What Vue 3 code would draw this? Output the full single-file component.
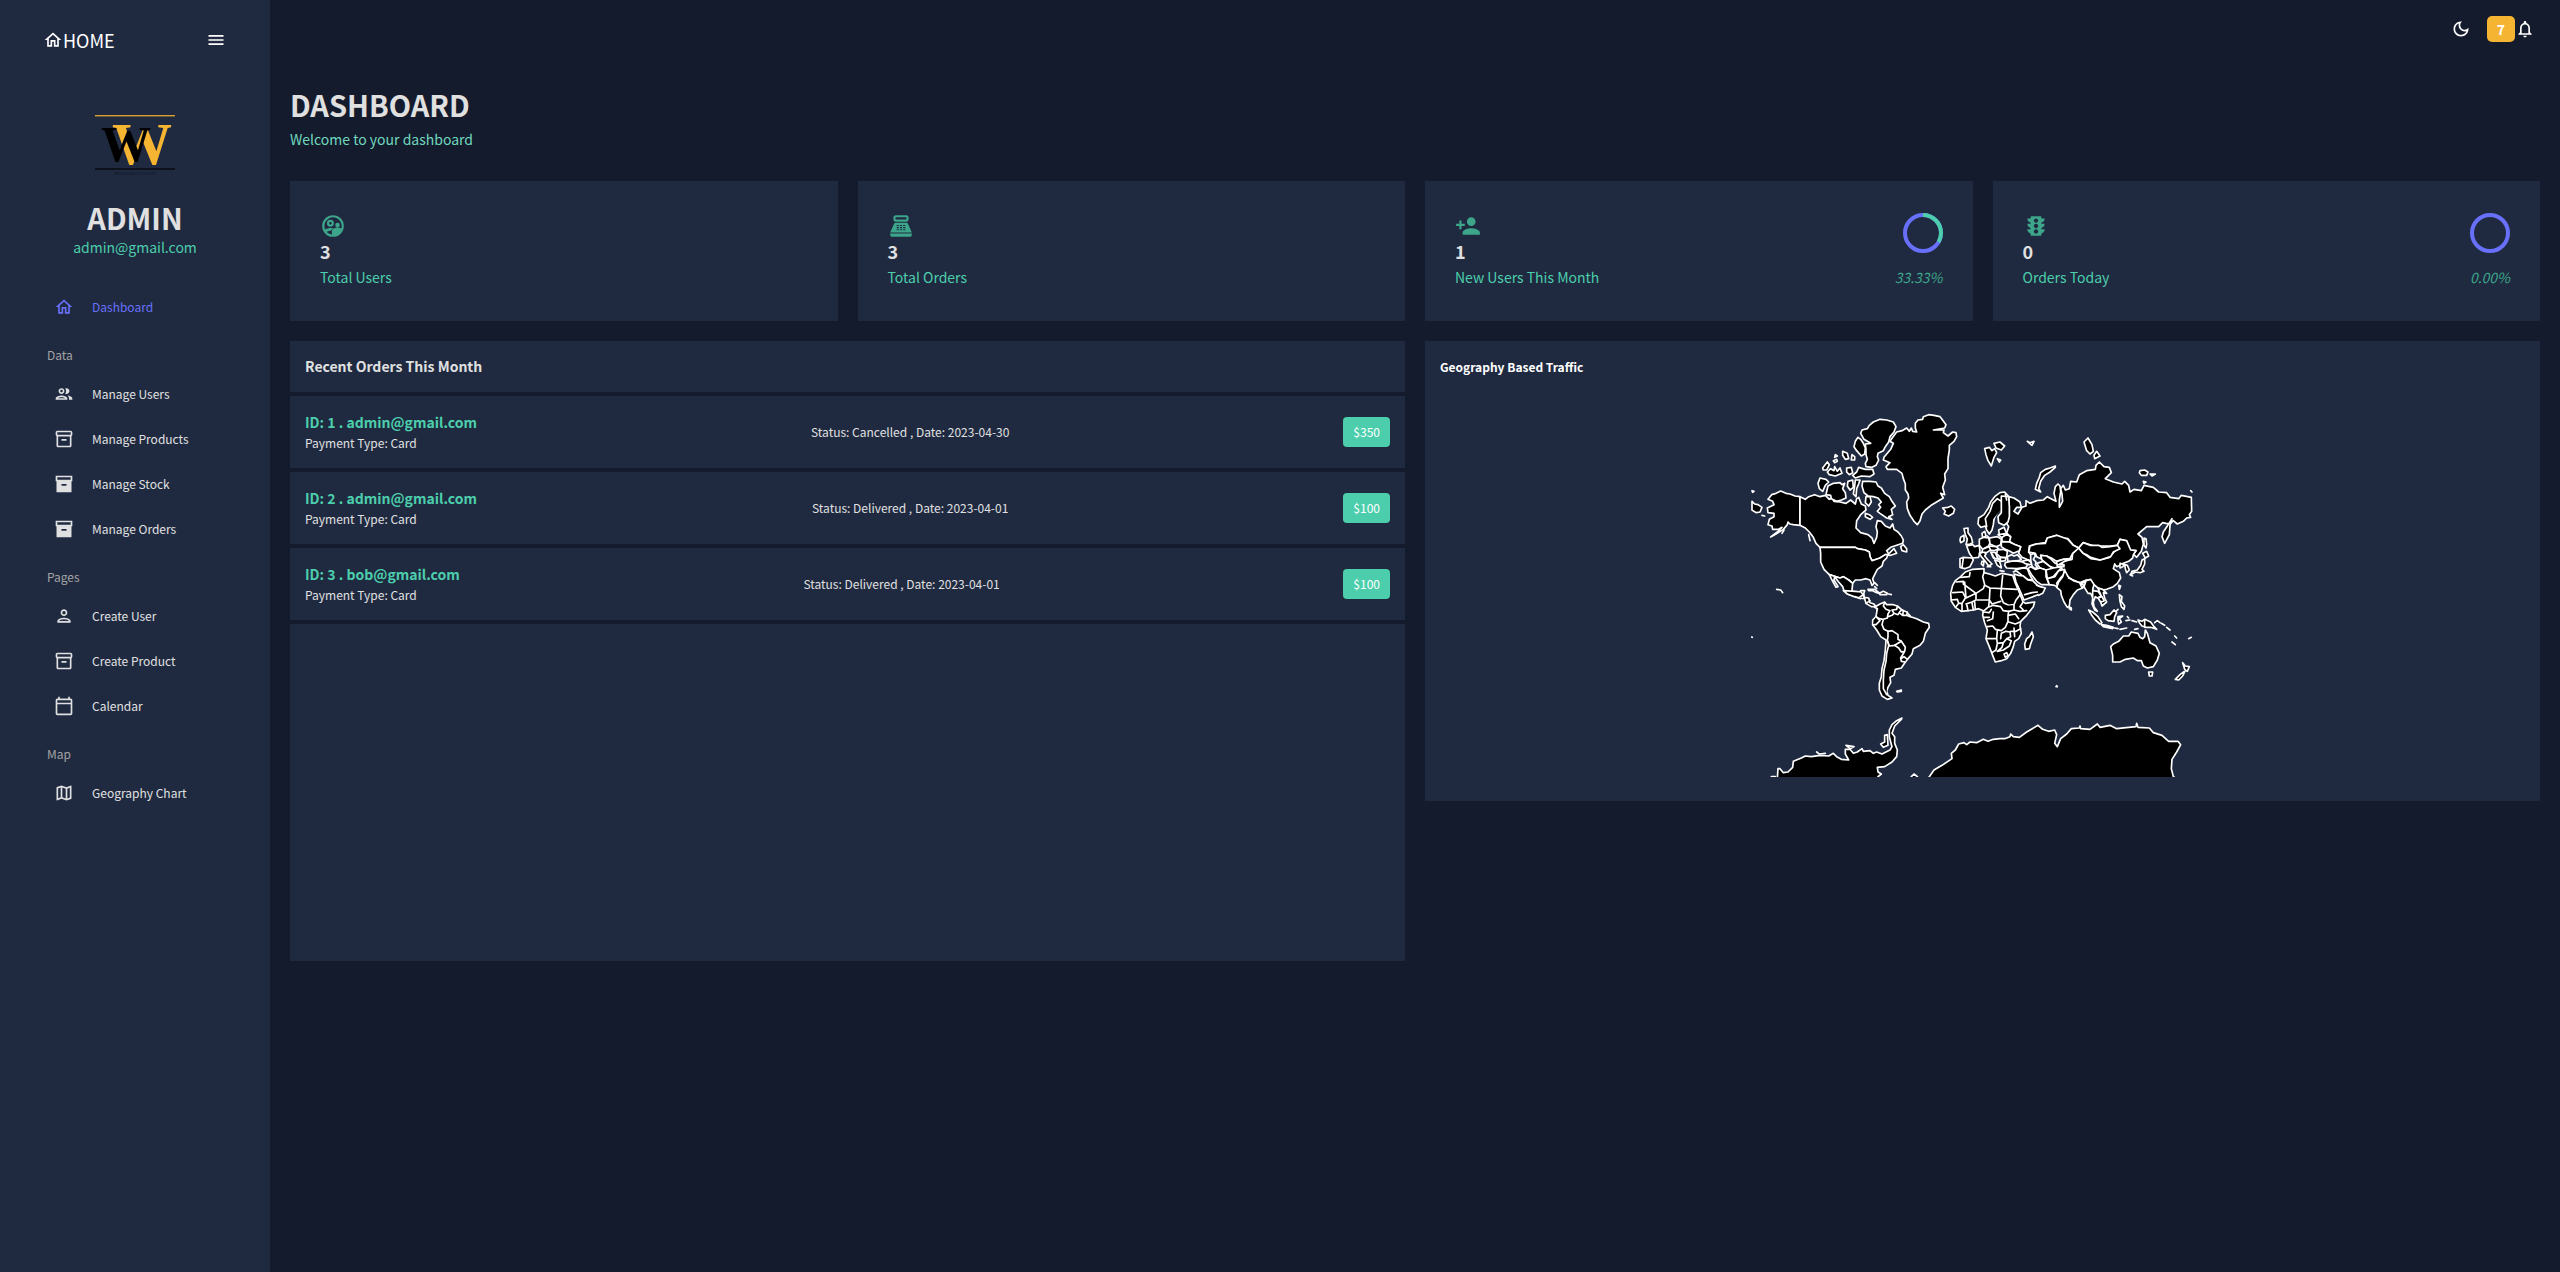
<script setup>
const icons = {
  home: 'm12 5.69 5 4.5V18h-2v-6H9v6H7v-7.81l5-4.5M12 3 2 12h3v8h6v-6h2v6h6v-8h3L12 3z',
  menu: 'M3 18h18v-2H3v2zm0-5h18v-2H3v2zm0-7v2h18V6H3z',
  people:
    'M9 13.75c-2.34 0-7 1.17-7 3.5V19h14v-1.75c0-2.33-4.66-3.5-7-3.5zM4.34 17c.84-.58 2.87-1.25 4.66-1.25s3.82.67 4.66 1.25H4.34zM9 12c1.93 0 3.5-1.57 3.5-3.5S10.93 5 9 5 5.5 6.57 5.5 8.5 7.07 12 9 12zm0-5c.83 0 1.5.67 1.5 1.5S9.83 10 9 10s-1.5-.67-1.5-1.5S8.17 7 9 7zm7.04 6.81c1.16.84 1.96 1.96 1.96 3.44V19h4v-1.75c0-2.02-3.5-3.17-5.96-3.44zM15 12c1.93 0 3.5-1.57 3.5-3.5S16.93 5 15 5c-.54 0-1.04.13-1.5.35.63.89 1 1.98 1 3.15s-.37 2.26-1 3.15c.46.22.96.35 1.5.35z',
  box: 'M20 2H4c-1 0-2 .9-2 2v3.01c0 .72.43 1.34 1 1.69V20c0 1.1 1.1 2 2 2h14c.9 0 2-.9 2-2V8.7c.57-.35 1-.97 1-1.69V4c0-1.1-1-2-2-2zm-1 18H5V9h14v11zm1-13H4V4h16v3zM9 12h6v2H9z',
  boxSolid: 'M2 2v6.7h1V22h18V8.7h1V2H2zm13 12H9v-2h6v2zm5-7H4V4h16v3z',
  person:
    'M12 6c1.1 0 2 .9 2 2s-.9 2-2 2-2-.9-2-2 .9-2 2-2m0 10c2.7 0 5.8 1.29 6 2H6c.23-.72 3.31-2 6-2m0-12C9.79 4 8 5.79 8 8s1.79 4 4 4 4-1.79 4-4-1.79-4-4-4zm0 10c-2.67 0-8 1.34-8 4v2h16v-2c0-2.66-5.33-4-8-4z',
  calendar:
    'M20 3h-1V1h-2v2H7V1H5v2H4c-1.1 0-2 .9-2 2v16c0 1.1.9 2 2 2h16c1.1 0 2-.9 2-2V5c0-1.1-.9-2-2-2zm0 18H4V10h16v11zm0-13H4V5h16v3z',
  map: 'M20.5 3l-.16.03L15 5.1 9 3 3.36 4.9c-.21.07-.36.25-.36.48V20.5c0 .28.22.5.5.5l.16-.03L9 18.9l6 2.1 5.64-1.9c.21-.07.36-.25.36-.48V3.5c0-.28-.22-.5-.5-.5zM10 5.47l4 1.4v11.66l-4-1.4V5.47zm-5 .99l3-1.01v11.7l-3 1.16V6.46zm14 11.08l-3 1.01V6.86l3-1.16v11.84z',
  moon: 'M9.37 5.51c-.18.64-.27 1.31-.27 1.99 0 4.08 3.32 7.4 7.4 7.4.68 0 1.35-.09 1.99-.27C17.45 17.19 14.93 19 12 19c-3.86 0-7-3.14-7-7 0-2.93 1.81-5.45 4.37-6.49zM12 3c-4.97 0-9 4.03-9 9s4.03 9 9 9 9-4.03 9-9c0-.46-.04-.92-.1-1.36-.98 1.37-2.58 2.26-4.4 2.26-2.98 0-5.4-2.42-5.4-5.4 0-1.81.89-3.42 2.26-4.4-.44-.06-.9-.1-1.36-.1z',
  bell: 'M12 22c1.1 0 2-.9 2-2h-4c0 1.1.89 2 2 2zm6-6v-5c0-3.07-1.64-5.64-4.5-6.32V4c0-.83-.67-1.5-1.5-1.5s-1.5.67-1.5 1.5v.68C7.63 5.36 6 7.92 6 11v5l-2 2v1h16v-1l-2-2zm-2 1H8v-6c0-2.48 1.51-4.5 4-4.5s4 2.02 4 4.5v6z',
  users:
    'M12 2a10 10 0 1 0 0 20 10 10 0 0 0 0-20zm0 2a8 8 0 0 1 7.7 10.2c-1-.6-2.3-.9-3.5-.9-2.5 0-5.2 1.3-5.2 3.5v3.1a8 8 0 0 1-4.7-2.3c.9-.8 2.6-1.4 4-1.5.4-.8 1.1-1.4 1.9-1.9-.9-.2-1.8-.3-2.6-.3-1.6 0-3.5.5-4.8 1.4A8 8 0 0 1 12 4zM9.6 6.2a3.2 3.2 0 1 0 0 6.4 3.2 3.2 0 0 0 0-6.4zm0 2a1.2 1.2 0 1 1 0 2.4 1.2 1.2 0 0 1 0-2.4zM16.2 8.9a2.1 2.1 0 1 0 0 4.2 2.1 2.1 0 0 0 0-4.2z',
  register:
    'M17 2H7c-1.1 0-2 .9-2 2v2c0 1.1.9 2 2 2h10c1.1 0 2-.9 2-2V4c0-1.1-.9-2-2-2zm0 4H7V4h10v2zM20 22H4c-1.1 0-2-.9-2-2v-1h20v1c0 1.1-.9 2-2 2zM18.53 10.19C18.21 9.47 17.49 9 16.7 9H7.3c-.79 0-1.51.47-1.83 1.19L2 18h20l-3.47-7.81zM8 15h2v1H8zM8 13h2v1H8zM8 11h2v1H8zM11 15h2v1h-2zM11 13h2v1h-2zM11 11h2v1h-2zM14 15h2v1h-2zM14 13h2v1h-2zM14 11h2v1h-2z',
  personAdd:
    'M15 12c2.21 0 4-1.79 4-4s-1.79-4-4-4-4 1.79-4 4 1.79 4 4 4zm-9-2V7H4v3H1v2h3v3h2v-3h3v-2H6zm9 4c-2.67 0-8 1.34-8 4v2h16v-2c0-2.66-5.33-4-8-4z',
  traffic:
    'M20 10h-3V8.86c1.72-.45 3-2 3-3.86h-3V4c0-.55-.45-1-1-1H8c-.55 0-1 .45-1 1v1H4c0 1.86 1.28 3.41 3 3.86V10H4c0 1.86 1.28 3.41 3 3.86V15H4c0 1.86 1.28 3.41 3 3.86V20c0 .55.45 1 1 1h8c.55 0 1-.45 1-1v-1.14c1.72-.45 3-2 3-3.86h-3v-1.14c1.72-.45 3-2 3-3.86zm-8 9c-1.11 0-2-.9-2-2s.89-2 2-2c1.1 0 2 .9 2 2s-.89 2-2 2zm0-5c-1.11 0-2-.9-2-2s.89-2 2-2c1.1 0 2 .9 2 2s-.89 2-2 2zm0-5c-1.11 0-2-.9-2-2 0-1.11.89-2 2-2 1.1 0 2 .89 2 2 0 1.1-.89 2-2 2z',
}

const sections = [
  { title: '', items: [{ label: 'Dashboard', icon: 'home', active: true }] },
  {
    title: 'Data',
    items: [
      { label: 'Manage Users', icon: 'people' },
      { label: 'Manage Products', icon: 'box' },
      { label: 'Manage Stock', icon: 'boxSolid' },
      { label: 'Manage Orders', icon: 'boxSolid' },
    ],
  },
  {
    title: 'Pages',
    items: [
      { label: 'Create User', icon: 'person' },
      { label: 'Create Product', icon: 'box' },
      { label: 'Calendar', icon: 'calendar' },
    ],
  },
  { title: 'Map', items: [{ label: 'Geography Chart', icon: 'map' }] },
]

const stats = [
  { icon: 'users', value: '3', label: 'Total Users' },
  { icon: 'register', value: '3', label: 'Total Orders' },
  { icon: 'personAdd', value: '1', label: 'New Users This Month', share: 33.33 },
  { icon: 'traffic', value: '0', label: 'Orders Today', share: 0 },
]

const orders = [
  { id: 1, email: 'admin@gmail.com', payment: 'Card', status: 'Cancelled', date: '2023-04-30', total: 350 },
  { id: 2, email: 'admin@gmail.com', payment: 'Card', status: 'Delivered', date: '2023-04-01', total: 100 },
  { id: 3, email: 'bob@gmail.com', payment: 'Card', status: 'Delivered', date: '2023-04-01', total: 100 },
]

// Land masses, grouped by continent; each group has its own origin on the map.
const land = [
  {
    name: 'north-america',
    x: 0,
    y: 0,
    shapes: [
      'M180 290L165 288 150 282 138 280 122 273 108 280 95 284 84 298 98 304 102 314 82 324 84 338 102 340 102 350 88 358 84 374 96 378 98 388 116 388 126 382 112 396 92 411 108 402 130 388 142 374 144 366 150 372 160 374 180 376Z',
      'M180 290L196 298 206 290 224 284 240 290 256 286 268 298 276 294 282 304 300 306 318 310 332 300 346 312 350 296 356 292 364 312 376 318 378 330 362 344 350 362 348 384 362 398 384 404 396 414 402 430 410 412 412 396 408 380 412 362 424 364 436 378 450 384 458 372 462 388 474 396 484 408 490 420 488 430 470 436 452 442 440 452 446 462 462 446 470 460 452 466 436 464 420 474 396 482 390 470 388 456 376 450 352 446 346 442 240 442 228 430 220 412 208 396 196 384 180 376Z',
      'M240 442L346 442 352 446 376 450 388 456 390 470 396 482 420 474 436 464 444 464 440 474 430 484 426 498 412 508 404 524 398 536 402 550 396 556 390 540 378 536 362 540 346 540 338 550 326 540 310 530 300 534 268 524 252 508 242 486 242 460Z',
      'M268 524L300 534 310 530 326 540 338 550 336 570 344 582 356 584 362 572 374 572 370 584 362 596 344 590 322 582 312 572 308 560 296 546 284 530 282 540 294 560 288 562 276 540Z',
      'M500 84L486 92 470 96 458 112 450 124 460 130 452 148 432 172 430 180 450 188 438 200 442 208 470 208 486 220 490 236 496 252 496 270 504 282 506 294 500 306 502 326 510 346 522 364 532 374 540 362 546 342 556 330 576 314 596 302 610 294 602 280 614 284 608 262 616 240 614 222 624 206 624 176 628 150 628 136 642 124 650 110 648 98 638 96 624 108 610 98 612 90 580 90 614 84 618 74 606 58 600 50 582 46 566 44 550 50 548 58 534 60 526 70 526 84 530 96 518 94 514 84 508 94Z',
      'M400 66L420 58 440 60 460 66 468 80 462 96 450 110 446 126 436 140 430 152 414 160 412 170 416 180 408 196 396 202 378 200 376 190 382 178 378 164 378 150 376 132 392 130 372 118 362 100 366 90 382 86 388 76Z',
      'M354 112L346 124 342 140 350 152 364 168 374 162 376 144 370 130 362 118Z',
      'M366 258L368 244 390 244 408 246 414 258 424 264 434 280 448 290 456 304 466 318 454 328 458 344 446 350 456 358 440 354 420 340 412 334 422 322 416 314 424 306 414 294 400 290 384 288 372 278Z',
      'M356 202L376 208 398 208 402 222 390 230 364 228 346 234 338 226 350 216Z',
      'M240 234L258 238 266 246 256 256 248 274 238 266 234 250Z',
      'M264 258L280 250 300 248 306 254 314 250 308 266 316 278 318 294 304 300 290 304 274 296 272 286 258 284Z',
      'M324 244L338 240 340 262 330 270 322 258Z',
      'M346 240L360 240 356 252 350 266 348 290 340 282 344 258Z',
      'M248 204L262 186 268 194 260 210 250 210Z',
      'M262 216L272 206 282 212 284 200 292 214 300 204 306 220 286 228 268 224Z',
      'M308 154L322 160 326 176 316 178 308 166Z',
      'M320 204L334 202 338 218 328 224 320 216Z',
      'M336 164L344 170 344 180 334 180Z',
      'M286 164L292 168 284 172ZM280 182L290 178 292 184 284 188Z',
      'M378 290L390 290 394 306 386 318 376 308Z',
      'M376 340L388 344 398 352 390 358 376 350Z',
      'M608 324L624 322 634 318 644 328 640 340 626 348 612 342 616 334Z',
      'M36 304L44 312 54 314 66 322 60 336 48 338 36 330Z',
      'M36 272L42 274 38 277ZM66 346L74 348',
      'M482 440L490 434 500 446 500 456 486 452Z',
      'M384 568L404 568 420 580 410 578 398 572 386 572Z',
      'M418 580L430 574 442 580 440 584 420 584ZM446 582L454 584',
      'M404 548L412 556M404 560L410 566',
      'M110 568L122 570 128 578M132 390L126 400M206 404L210 422',
    ],
  },
  {
    name: 'south-america',
    x: 0,
    y: 570,
    shapes: [
      'M310 2L322 12 344 20 360 24 374 26 378 40 394 50 408 50 402 42 390 38 386 24 372 22 364 6 346 4Z',
      'M360 20L372 14 372 24M378 40L390 32',
      'M412 56L404 52 410 48 420 42 434 36 440 44 460 44 472 48 486 60 500 66 512 80 530 86 550 96 566 100 568 112 556 130 550 154 540 166 520 176 516 192 504 206 496 216 484 234 466 238 462 256 450 262 452 278 444 292 440 304 444 316 456 324 442 328 426 318 418 300 418 280 424 260 426 236 432 212 436 180 438 150 422 140 410 120 398 104 398 90 410 78Z',
      'M412 56L408 80 418 86 430 88 426 104 432 118 444 124 M434 38L430 48 438 58 450 62 444 72 442 84 430 88 M444 80L456 76 462 70 456 60 470 58 472 48 M462 70L474 74 480 64 486 60M480 70L488 76 490 62M490 76L500 76 502 66M500 76L510 80',
      'M444 124L456 122 474 134 474 148 484 154 480 162 464 166 448 168 442 152 444 140Z',
      'M442 152L446 166 440 190 438 214 432 240 430 270 430 296 440 314',
      'M464 166L484 154 496 172 494 184 484 186 476 174Z M494 184L482 204 484 214 496 216 M482 206L492 200 502 208',
      'M398 104L408 104 420 92 408 80',
      'M470 304L484 300 484 304 472 306Z',
      'M34 141L37 142',
    ],
  },
  {
    name: 'antarctica',
    x: 0,
    y: 570,
    shapes: [
      'M112 566L114 536 120 536 130 548 144 546 158 532 160 514 184 504 196 498 214 500 240 496 266 498 280 490 290 500 304 508 326 510 316 492 316 478 330 478 340 490 352 486 366 476 370 484 390 482 400 490 410 486 426 492 450 480 456 470 448 440 448 420 456 404 470 392 486 384 484 388 464 408 456 430 464 440 464 460 472 480 470 500 456 516 434 530 412 532 414 546 424 552 414 560 416 566Z',
      'M422 462L434 456 434 436 442 434 444 466 430 472Z',
      'M230 486L238 492 256 490M318 466L342 470 330 476ZM94 560L106 560M514 560L522 552 532 560',
      'M564 566L582 540 606 526 636 506 634 490 646 480 656 462 672 458 680 464 690 456 710 458 730 448 744 454 760 448 780 446 794 446 810 440 812 432 820 440 838 442 860 426 894 406 908 418 926 424 944 420 950 434 944 460 952 470 962 446 980 432 994 416 1018 414 1020 408 1022 416 1050 418 1072 402 1080 412 1110 406 1130 416 1188 410 1190 400 1194 412 1228 414 1240 428 1266 436 1286 454 1314 454 1322 464 1310 486 1296 508 1294 536 1300 560 1310 566Z',
      'M948 290L952 290 950 287Z',
    ],
  },
  {
    name: 'europe-and-asia',
    x: 600,
    y: 60,
    shapes: [
      'M206 230L222 234 240 246 244 262 230 262 222 274 234 282 246 262 258 258 258 242 270 250 290 242 310 240 322 230 336 238 348 244 342 220 346 200 354 192 360 198 362 214 358 240 358 262 368 244 366 222 362 206 370 196 376 210 388 206 392 184 410 186 418 164 440 152 466 148 468 136 478 126 492 140 508 142 514 158 496 176 520 186 546 192 554 184 566 196 570 216 582 208 604 212 612 196 640 202 656 216 680 218 690 232 716 236 724 226 754 232 755 274 748 284 752 292 740 294 730 304 712 312 700 302 690 312 678 310 668 308 656 320 620 320 594 342 606 352 610 372 604 394 590 412 580 402 588 392 570 390 560 364 540 358 532 376 510 378 484 378 462 378 430 368 416 384 400 376 384 356 370 354 350 346 322 354 316 368 288 372 268 378 266 396 272 404 276 424 260 418 246 412 236 400 242 380 220 372 206 362 212 350 200 340 206 320 200 310 208 290 208 260Z',
      'M696 296L690 316 688 344 674 370 666 350 670 336 682 318Z',
      'M352 430L370 424 396 418 398 400 416 384 430 400 452 416 480 420 508 412 522 396 534 384 532 376 540 358 560 362 572 390 588 392 580 404 578 414 566 424 550 430 540 436 530 440 524 432 520 446 538 458 542 474 532 490 520 500 500 508 488 510 474 504 462 494 452 480 436 482 420 488 400 482 388 476 374 456Z',
      'M416 384L430 368 450 376 476 376 486 382 510 380 532 376 540 386 520 396 512 410 480 420 452 412 440 404 430 400Z',
      'M266 396L270 378 290 372 316 370 322 354 350 346 384 358 400 376 416 384 398 400 390 416 370 418 350 424 334 414 320 408 302 406 306 418 290 410 286 400Z',
      'M302 406L320 408 334 418 346 430 366 430 366 438 350 446 330 440 306 420Z',
      'M290 430L310 424 330 440 342 448 324 452 300 444Z',
      'M350 424L370 418 390 416 370 426 356 434 372 434 372 440 352 440Z',
      'M272 440L286 448 300 444 318 450 318 470 328 494 304 494 290 484 276 466 264 446Z',
      'M318 450L340 444 366 440 356 452 340 470 322 476Z',
      'M322 476L345 470 356 452 374 448 372 462 360 476 350 490 356 504 344 496 328 494Z',
      'M374 450L384 470 400 482 424 490 450 482 438 492 428 504 412 510 400 524 390 540 388 558 382 562 372 546 364 526 362 512 350 502 356 486 368 470Z',
      'M386 474L408 484M424 486L440 480M420 490L426 504 432 496Z',
      'M387 560L394 564 394 570 388 566Z',
      'M438 482L452 478 462 494 458 508 466 518 458 532 452 520 444 520 432 500Z',
      'M458 512L474 514 484 528 472 534 466 530 460 546 462 560 472 574 464 570 456 552 458 536Z',
      'M474 504L488 508 500 520 490 518 494 534 500 546 486 558 482 546 492 542 484 528 478 514Z',
      'M474 534L486 530 492 542 482 546Z',
      'M446 570L458 576 474 590 486 608 480 612 466 600 454 584Z',
      'M484 614L500 616 520 622 518 626 490 620ZM524 624L534 626M540 628L560 624',
      'M496 586L510 584 522 570 530 578 524 590 522 604 504 602 496 596Z',
      'M534 590L548 588 538 596 544 606 536 612 534 600ZM534 568L528 574',
      'M538 524L546 530 544 544 554 558 552 568 544 560 540 544Z',
      'M536 496L542 498 538 508Z',
      'M558 602L570 600M562 590L566 594M576 602L590 606M584 628L594 626',
      'M594 600L606 604 614 598 632 606 642 620 650 628 632 622 618 622 606 618 598 608Z',
      'M614 600L614 622M644 608L652 602 660 608M664 610L674 616M680 622L690 630',
      'M554 434L562 436 568 450 560 458 556 446Z',
      'M540 430L554 434 548 440 540 444Z',
      'M612 354L618 356 620 372 618 384 612 376Z',
      'M608 400L620 394 626 408 616 414Z M614 416L614 432 606 448 612 454 600 458 586 456 572 464 576 454 592 450 602 436 606 420Z M570 464L578 468',
      'M432 66L444 54 456 74 460 94 450 102 440 92Z',
      'M470 94L480 108 464 116 462 106Z',
      'M346 138L330 144 316 148 302 158 298 172 290 190 286 208 302 216 296 206 302 184 314 166 330 156 346 142Z',
      'M600 152L614 150 624 156 620 166 604 166 598 158Z M630 162L646 162 636 168Z M610 184L618 186 612 190Z M752 212L756 216',
      'M134 86L148 82 156 92 164 86 170 98 162 112 154 138 144 122 138 104Z',
      'M162 70L180 66 194 78 184 90 168 84Z M172 116L182 120 178 126Z M262 64L270 68 282 64 276 76Z',
      'M206 230L194 216 180 218 164 230 152 246 146 262 132 284 116 294 114 312 122 322 136 318 140 330 148 342 156 330 160 314 162 298 166 288 176 272 184 268 184 278 174 290 176 308 192 316 204 306 208 290 208 260Z',
      'M140 320L136 296 150 274 158 250 172 236 184 244 184 268M184 244L184 228 206 230M196 222L200 240',
      'M126 340L134 334 138 348 128 354Z M142 348L146 352',
      'M72 326L84 324 84 338 94 352 98 368 90 372 78 374 82 358 76 344Z',
      'M62 352L72 346 72 362 62 368 60 360Z',
      'M118 358L132 352 146 354 150 368 146 378 128 388 118 376Z',
      'M148 354L172 350 184 358 182 374 168 380 150 372Z',
      'M176 330L192 322 200 340 186 342 178 344Z M174 344L190 342 196 350 184 352Z',
      'M186 352L202 342 212 352 208 366 186 364Z',
      'M184 366L208 366 226 374 242 380 238 392 220 400 210 394 196 388 184 380Z',
      'M80 378L98 374 104 380 118 376 120 396 116 412 98 414 88 400Z',
      'M60 416L70 412 96 414 100 420 90 440 74 446 60 442Z M70 414L66 442',
      'M118 400L132 396 138 402 134 408 144 420 156 432 146 438 136 424 124 410Z M126 424L132 424 130 438 124 432Z M142 440L152 440',
      'M128 388L146 380 154 388 140 398 126 396Z',
      'M146 378L168 380 176 386 162 392 152 390Z',
      'M172 390L190 388 202 394 200 412 182 412 170 402Z',
      'M152 396L166 398 172 412 178 418 160 414Z',
      'M180 412L198 414 196 422 182 424Z M164 420L178 424 182 434 184 444 172 436Z M156 402L164 416',
      'M180 452L192 454M220 456L228 452',
      'M196 428L220 422 250 426 266 430 258 442 230 446 200 444 194 436Z',
      'M244 424L264 420 278 430 268 434 254 430Z',
      'M226 450L250 444 262 446 268 462 278 480 262 478 246 466Z',
      'M222 462L236 466 250 468 264 480 278 482 290 494 310 506 306 518 290 526 262 536 252 540 246 526 238 508 228 486Z',
      'M290 496L300 500 316 504 308 520 296 526M254 524L276 518 292 516',
      'M512 680L520 672 536 664 550 648 566 648 574 636 594 640 600 652 608 656 614 650 616 630 622 640 630 668 648 678 658 700 652 720 640 740 622 744 610 738 604 722 592 722 580 714 556 718 540 726 518 726 518 706Z',
      'M626 756L638 756 636 768 628 768Z',
      'M728 728L736 738 748 740 742 754 734 748Z M736 752L728 768 716 780 706 778 720 764Z',
      'M704 648L710 654M696 666L706 674M746 656L754 652',
    ],
  },
  {
    name: 'africa',
    x: 600,
    y: 60,
    shapes: [
      'M62 470L76 456 98 448 132 446 132 458 148 462 166 468 186 460 218 466 224 484 232 504 240 522 248 544 256 550 284 546 280 560 260 586 242 604 240 618 244 640 236 656 224 664 220 680 212 700 200 716 184 722 166 726 158 706 148 680 138 656 142 630 134 608 128 586 130 572 116 566 100 570 84 572 64 574 46 562 34 544 32 520 38 496 46 482Z',
      'M62 472L88 470 90 458 M48 486L70 484 70 492 108 520 130 506 134 494 128 470 132 458 M108 520L78 534 74 486 M38 518L68 516 76 532 M34 540L52 538 56 550 66 550 76 534 M66 550L66 572M56 550L48 560M80 552L84 572M96 548L100 570M78 552L96 546 108 540 108 520M104 546L106 568',
      'M134 496L150 504 184 506 188 466M188 506L230 508M184 506L182 528 190 548 206 556 222 554 228 540 240 524M150 504L148 540 112 540M148 540L146 560 130 574M148 540L156 552 182 544',
      'M148 560L160 556 182 560 190 572 206 574 222 570 222 556M130 576L148 578 154 568M142 602L158 596 160 576 M132 592L148 592',
      'M142 620L158 618 166 628 184 632 196 622 204 604 204 586 206 574M140 656L170 656 172 632M170 656L172 670 168 690 156 698M172 670L190 668 200 656 212 650 210 636 198 634 184 640 182 656M206 606L226 612 240 606M204 586L226 582 236 596M222 570L240 574 260 572M212 634L228 634 242 626M222 624L224 650M190 668L186 682 172 694 190 690 208 678 214 662 200 656M248 548L240 560 250 570',
      'M192 702L200 698 204 706 196 712Z',
      'M276 636L280 650 272 672 268 686 256 688 254 672 260 656 268 650Z',
    ],
  },
]
</script>

<template>
  <div class="app">
    <aside class="sidebar">
      <div class="brand-row">
        <a class="home-link" href="#">
          <svg class="icon" viewBox="0 0 24 24" aria-hidden="true"><path :d="icons.home" /></svg>
          <span>HOME</span>
        </a>
        <button class="icon-button" type="button" aria-label="Collapse menu">
          <svg class="icon" viewBox="0 0 24 24" aria-hidden="true"><path :d="icons.menu" /></svg>
        </button>
      </div>

      <div class="profile">
        <svg class="logo" viewBox="0 0 80 64" role="img" aria-label="Logo">
          <rect x="0" y="0" width="80" height="1" fill="#d9a032" />
          <rect x="0" y="1" width="80" height="1" fill="#6b5a38" />
          <text class="logo-letter gold" x="17" y="49">W</text>
          <text class="logo-letter dark" x="6" y="46">W</text>
          <rect x="0" y="53" width="80" height="2" fill="#0d121c" />
          <text class="logo-tagline" x="40" y="60">PREMIUM QUALITY CLOTHING</text>
        </svg>
        <h2 class="profile-name">ADMIN</h2>
        <p class="profile-mail">admin@gmail.com</p>
      </div>

      <nav class="nav">
        <section v-for="section in sections" :key="section.title">
          <h3 v-if="section.title" class="nav-title">{{ section.title }}</h3>
          <a
            v-for="item in section.items"
            :key="item.label"
            class="nav-item"
            :class="{ active: item.active }"
            href="#"
          >
            <svg class="icon" viewBox="0 0 24 24" aria-hidden="true"><path :d="icons[item.icon]" /></svg>
            <span>{{ item.label }}</span>
          </a>
        </section>
      </nav>
    </aside>

    <main class="content">
      <header class="topbar">
        <button class="icon-button" type="button" aria-label="Toggle dark mode">
          <svg class="icon" viewBox="0 0 24 24" aria-hidden="true"><path :d="icons.moon" /></svg>
        </button>
        <button class="icon-button alerts" type="button" aria-label="Notifications">
          <span class="count">7</span>
          <svg class="icon" viewBox="0 0 24 24" aria-hidden="true"><path :d="icons.bell" /></svg>
        </button>
      </header>

      <div class="page-title">
        <h1>DASHBOARD</h1>
        <p>Welcome to your dashboard</p>
      </div>

      <div class="grid">
        <section v-for="stat in stats" :key="stat.label" class="card stat">
          <div class="stat-main">
            <svg class="stat-icon" viewBox="0 0 24 24" aria-hidden="true">
              <path fill-rule="evenodd" :d="icons[stat.icon]" />
            </svg>
            <strong class="stat-value">{{ stat.value }}</strong>
            <span class="stat-label">{{ stat.label }}</span>
          </div>
          <div v-if="stat.share !== undefined" class="stat-side">
            <svg class="ring" viewBox="0 0 40 40" aria-hidden="true">
              <circle class="ring-track" cx="20" cy="20" r="18" />
              <circle
                v-if="stat.share"
                class="ring-value"
                cx="20"
                cy="20"
                r="18"
                pathLength="100"
                :stroke-dasharray="`${stat.share} 100`"
                transform="rotate(-90 20 20)"
              />
            </svg>
            <em class="stat-share">{{ stat.share.toFixed(2) }}%</em>
          </div>
        </section>

        <section class="card orders">
          <h2 class="orders-title">Recent Orders This Month</h2>
          <article v-for="order in orders" :key="order.id" class="order">
            <div>
              <h3 class="order-id">ID: {{ order.id }} . {{ order.email }}</h3>
              <p class="order-text">Payment Type: {{ order.payment }}</p>
            </div>
            <p class="order-text">Status: {{ order.status }} , Date: {{ order.date }}</p>
            <span class="order-total">${{ order.total }}</span>
          </article>
        </section>

        <section class="card geo">
          <h2 class="geo-title">Geography Based Traffic</h2>
          <svg class="world" viewBox="33 30 1389 1101" role="img" aria-label="World map">
            <g v-for="group in land" :key="group.name" :transform="`translate(${group.x} ${group.y})`">
              <path v-for="(shape, index) in group.shapes" :key="index" :d="shape" />
            </g>
            <g class="water" transform="translate(600 60)">
              <path d="M272 404L282 400 286 408 280 418 288 426 286 434 292 442 284 446 276 438 272 420Z" />
              <path d="M202 410L214 404 222 408 232 404 244 418 236 422 204 424Z" />
            </g>
          </svg>
        </section>
      </div>
    </main>
  </div>
</template>

<style>
body {
  background: #141b2d;
}
</style>

<style scoped>
.app {
  display: flex;
  min-height: 100vh;
  background: #141b2d;
  color: #e0e0e0;
  font-family: 'Noto Sans CJK SC', 'Noto Sans', sans-serif;
  font-size: 12px;
  line-height: 20px;
}

h1,
h2,
h3,
p {
  margin: 0;
}

a {
  color: inherit;
  text-decoration: none;
}

.icon {
  display: block;
  flex: none;
  width: 20px;
  height: 20px;
  fill: currentColor;
}

.icon-button {
  display: flex;
  align-items: center;
  padding: 0;
  border: 0;
  background: none;
  color: #fff;
  font: inherit;
  cursor: pointer;
}

.sidebar {
  box-sizing: border-box;
  flex: none;
  width: 270px;
  background: #1f2a40;
}

.brand-row {
  display: flex;
  align-items: center;
  justify-content: space-between;
  height: 40px;
  padding: 20px 44px 0 43px;
}

.home-link {
  display: flex;
  align-items: center;
  color: #fff;
  font-size: 18px;
}

.profile {
  display: flex;
  flex-direction: column;
  align-items: center;
  padding-top: 55px;
}

.logo {
  display: block;
  width: 80px;
  height: 64px;
}

.logo-letter {
  font-family: 'Liberation Serif', serif;
  font-weight: 700;
}

.logo-letter.gold {
  font-size: 60px;
  fill: #f5b431;
}

.logo-letter.dark {
  font-size: 50px;
  fill: #000;
}

.logo-tagline {
  font-size: 3px;
  fill: #0d121c;
  text-anchor: middle;
}

.profile-name {
  margin-top: 18px;
  font-size: 29px;
  font-weight: 700;
  line-height: 40px;
}

.profile-mail {
  color: #4cceac;
  font-size: 14px;
}

.nav {
  padding-top: 27px;
}

.nav-title {
  margin: 16px 0 6px 47px;
  color: #a3a3a3;
  font-size: 12px;
  font-weight: 400;
}

.nav-item {
  display: flex;
  align-items: center;
  gap: 18px;
  height: 45px;
  padding-left: 54px;
}

.nav-item.active {
  color: #6870fa;
}

.content {
  flex: 1;
  min-width: 0;
  padding: 0 20px;
}

.topbar {
  display: flex;
  align-items: center;
  justify-content: flex-end;
  gap: 16px;
  height: 58px;
  padding-right: 5px;
}

.count {
  width: 28px;
  border-radius: 5px;
  background: #f5b431;
  font-size: 14px;
  font-weight: 700;
  line-height: 26px;
  text-align: center;
}

.page-title {
  padding: 24px 0 28px;
}

.page-title h1 {
  font-size: 29px;
  font-weight: 700;
  line-height: 44px;
}

.page-title p {
  color: #70d8bd;
  font-size: 14px;
  line-height: 27px;
}

.grid {
  display: grid;
  grid-template-columns: repeat(12, minmax(0, 1fr));
  grid-auto-rows: 140px;
  gap: 20px;
}

.card {
  background: #1f2a40;
}

.stat {
  display: flex;
  align-items: center;
  justify-content: space-between;
  grid-column: span 3;
  padding: 0 30px;
}

.stat-main {
  display: flex;
  flex-direction: column;
}

.stat-icon {
  width: 26px;
  height: 26px;
  fill: #3da58a;
}

.stat-value {
  font-size: 18px;
  line-height: 25px;
}

.stat-label {
  color: #4cceac;
  font-size: 14px;
  line-height: 26px;
}

.stat-side {
  display: flex;
  flex-direction: column;
  align-items: flex-end;
  gap: 11px;
}

.ring {
  width: 40px;
  height: 40px;
  fill: none;
  stroke-width: 4px;
}

.ring-track {
  stroke: #6870fa;
}

.ring-value {
  stroke: #4cceac;
}

.stat-share {
  color: #3da58a;
  font-size: 14px;
  line-height: 26px;
}

.orders {
  grid-column: span 6;
  grid-row: span 4;
  overflow: auto;
}

.orders-title {
  padding: 14px 15px 15px;
  border-bottom: 4px solid #141b2d;
  font-size: 14px;
  font-weight: 600;
  line-height: 22px;
}

.order {
  display: flex;
  align-items: center;
  justify-content: space-between;
  height: 72px;
  padding: 0 15px;
  border-bottom: 4px solid #141b2d;
}

.order-id {
  color: #4cceac;
  font-size: 14px;
  font-weight: 600;
  line-height: 22px;
}

.order-total {
  padding: 5px 10px;
  border-radius: 4px;
  background: #4cceac;
  color: #fff;
}

.geo {
  grid-column: span 6;
  grid-row: span 3;
  padding: 15px;
}

.geo-title {
  color: #fff;
  font-size: 12px;
  font-weight: 600;
  line-height: 22px;
}

.world {
  display: block;
  width: 463px;
  height: 367px;
  margin: 32px auto 0;
}

.world path {
  fill: #000;
  stroke: #fff;
  stroke-width: 5px;
  stroke-linejoin: round;
  stroke-linecap: round;
}

.world .water path {
  fill: #1f2a40;
}
</style>
